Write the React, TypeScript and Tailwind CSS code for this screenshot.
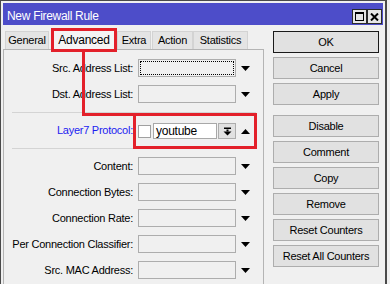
import React from 'react'

const topRows = ['Src. Address List:', 'Dst. Address List:']
const bottomRows = [
  'Content:',
  'Connection Bytes:',
  'Connection Rate:',
  'Per Connection Classifier:',
  'Src. MAC Address:',
]

const buttons = ['Cancel', 'Apply']
const moreButtons = ['Disable', 'Comment', 'Copy', 'Remove', 'Reset Counters', 'Reset All Counters']

function Tri({ up }: { up?: boolean }) {
  return (
    <svg width="9" height="5" viewBox="0 0 9 5" className="shrink-0">
      <polygon points={up ? '0,5 9,5 4.5,0' : '0,0 9,0 4.5,5'} fill="#000" />
    </svg>
  )
}

function Row({ label, focused }: { label: string; focused?: boolean }) {
  return (
    <div className="flex h-[26px] items-center">
      <span className="w-[129px] shrink-0 text-right">{label}</span>
      <div className="ml-[5px] h-[18px] w-[98px] shrink-0 border border-[#adadad] bg-[#f0f0f0] p-px">
        {focused && <div className="h-full w-full border border-dotted border-black" />}
      </div>
      <span className="ml-[5px]">
        <Tri />
      </span>
    </div>
  )
}

function Btn({ label, main }: { label: string; main?: boolean }) {
  return (
    <div
      className={
        'flex h-[22px] w-[106px] items-center justify-center border bg-[#e1e1e1] ' +
        (main ? 'border-[#1a1a1a]' : 'border-[#adadad]')
      }
    >
      {label}
    </div>
  )
}

export default function App() {
  return (
    <div className="relative h-[284px] w-[390px] overflow-hidden bg-[#f0f0f0] font-['Liberation_Sans',Arial,sans-serif] text-[11px] tracking-[-0.25px] text-black">
      <div className="flex h-full w-[387px] flex-col border-l border-t border-r-2 border-[#4a4a4a] bg-[#f0f0f0] px-[2px] pt-[2px]">
        {/* title bar */}
        <div className="flex h-[22px] shrink-0 items-center bg-[#4d4dc9] text-white">
          <span className="pl-[4px] pt-[3px] text-[12px] tracking-[-0.3px]">New Firewall Rule</span>
          <div className="mb-px mr-px ml-auto flex self-end">
            <div className="flex h-[15px] w-[15px] items-center justify-center border border-[#2b2b2b] bg-[#e6e6e6]">
              <div className="h-[9px] w-[9px] border border-t-2 border-black" />
            </div>
            <div className="flex h-[15px] w-[15px] items-center justify-center border border-[#2b2b2b] bg-[#e6e6e6]">
              <svg width="9" height="8" viewBox="0 0 9 8">
                <path d="M1 0.5 L8 7.5 M8 0.5 L1 7.5" stroke="#000" strokeWidth="2" />
              </svg>
            </div>
          </div>
        </div>

        {/* body */}
        <div className="mt-[3px] flex min-h-0 flex-1">
          <div className="flex w-[261px] shrink-0 flex-col">
            {/* tabs */}
            <div className="flex items-end pl-[2px]">
              <div className="flex h-[18px] w-[44px] items-center justify-center border border-b-0 border-[#d3d3d3] bg-[#e4e4e4]">
                General
              </div>
              <div className="relative z-10 mb-[-3px] ml-[2px] flex h-[24px] w-[66px] items-center justify-center border-[3px] border-[#e3202a] bg-[#f4f4f4] text-[12px]">
                Advanced
              </div>
              <div className="flex h-[18px] w-[34px] items-center justify-center border border-b-0 border-[#d3d3d3] bg-[#e4e4e4]">
                Extra
              </div>
              <div className="ml-px flex h-[18px] w-[41px] items-center justify-center border border-b-0 border-[#d3d3d3] bg-[#e4e4e4]">
                Action
              </div>
              <div className="flex h-[18px] w-[55px] items-center justify-center border border-b-0 border-[#d3d3d3] bg-[#e4e4e4]">
                Statistics
              </div>
            </div>

            {/* panel */}
            <div className="flex-1 border border-b-0 border-[#b4b4b4] bg-[#f0f0f0] pt-[5px]">
              {topRows.map((l, i) => (
                <Row key={l} label={l} focused={i === 0} />
              ))}
              <div className="mt-[5px] ml-[8px] h-px w-[244px] bg-[#d4d4d4]" />
              <div className="flex h-[35px] items-center">
                <span className="w-[129px] shrink-0 text-right text-[#1c1cf0]">Layer7 Protocol:</span>
                <div className="relative z-10 flex h-[36px] w-[124px] shrink-0 items-center self-start border-[3px] border-[#e3202a] pl-[2px]">
                  <div className="h-[13px] w-[13px] shrink-0 border border-[#a0a0a0] bg-white" />
                  <div className="ml-[2px] flex h-[16px] w-[64px] shrink-0 items-center border border-[#a8a8a8] bg-white pl-[2px] text-[12px]">
                    youtube
                  </div>
                  <div className="ml-px flex h-[16px] w-[18px] shrink-0 items-center justify-center border border-[#adadad] bg-[#e1e1e1]">
                    <svg width="9" height="9" viewBox="0 0 9 9">
                      <rect x="1" y="0.5" width="7" height="1.5" fill="#000" />
                      <rect x="3.5" y="2.5" width="2" height="2" fill="#000" />
                      <polygon points="0.5,4.5 8.5,4.5 4.5,8.5" fill="#000" />
                    </svg>
                  </div>
                  <span className="ml-[5px]">
                    <Tri up />
                  </span>
                </div>
              </div>
              <div className="ml-[8px] h-px w-[244px] bg-[#d4d4d4]" />
              <div className="mt-[4px]">
                {bottomRows.map((l) => (
                  <Row key={l} label={l} />
                ))}
              </div>
            </div>
          </div>

          {/* right buttons */}
          <div className="ml-[9px] flex flex-col gap-[4px] pt-[3px]">
            <Btn label="OK" main />
            {buttons.map((b) => (
              <Btn key={b} label={b} />
            ))}
            <div className="mt-[6px] flex flex-col gap-[4px]">
              {moreButtons.map((b) => (
                <Btn key={b} label={b} />
              ))}
            </div>
          </div>
        </div>
      </div>

      {/* annotation connector */}
      <div className="absolute left-[82px] top-[50px] h-[66px] w-[3px] bg-[#e3202a]" />
      <div className="absolute left-[82px] top-[113px] h-[3px] w-[52px] bg-[#e3202a]" />
    </div>
  )
}
